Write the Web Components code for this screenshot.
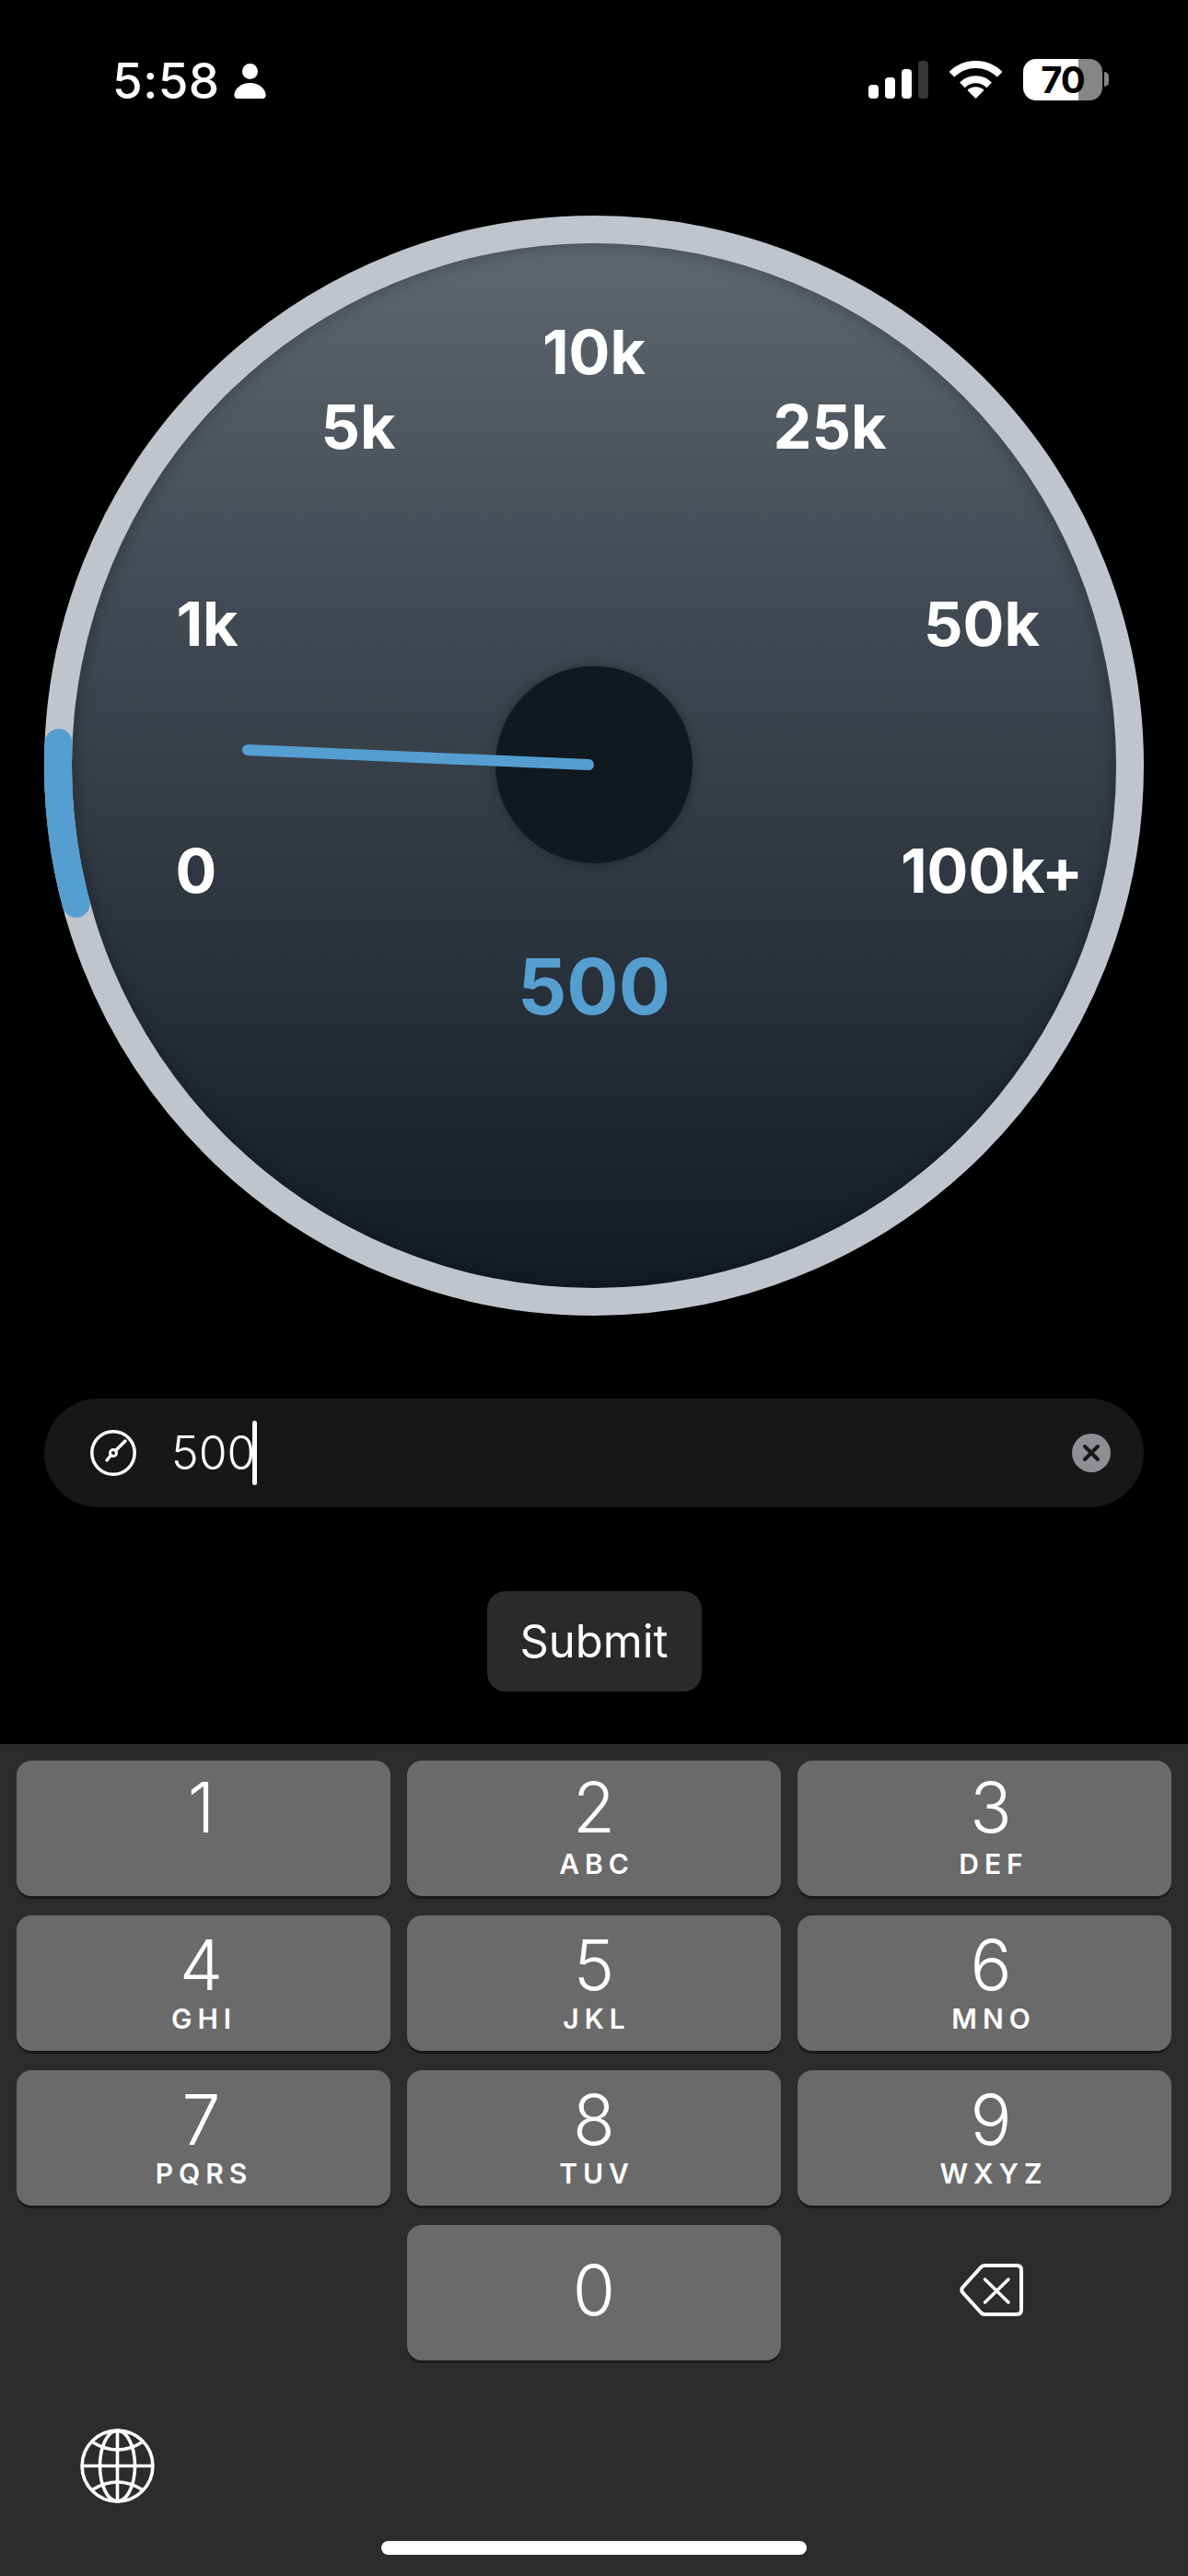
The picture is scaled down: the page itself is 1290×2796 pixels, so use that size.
<!DOCTYPE html>
<html lang="en">
<head>
<meta charset="utf-8">
<title>Gauge</title>
<style>
html, body { margin: 0; background: #000; }
body {
    width: 1290px;
    height: 2796px;
    overflow: hidden;
    display: flex;
    flex-direction: column;
    font-family: Inter, "Liberation Sans", sans-serif;
    color: #fff;
}
</style>
</head>
<body>
<status-bar time="5:58" battery="70"></status-bar>
<speed-gauge value="500">
    <gauge-mark x="597" y="148">10k</gauge-mark>
    <gauge-mark x="341" y="229">5k</gauge-mark>
    <gauge-mark x="853" y="229">25k</gauge-mark>
    <gauge-mark x="177" y="443">1k</gauge-mark>
    <gauge-mark x="1018" y="443">50k</gauge-mark>
    <gauge-mark x="165" y="711">0</gauge-mark>
    <gauge-mark x="1029" y="711">100k+</gauge-mark>
</speed-gauge>
<value-field>500</value-field>
<submit-button>Submit</submit-button>
<num-pad>
    <pad-key>1</pad-key>
    <pad-key letters="ABC">2</pad-key>
    <pad-key letters="DEF">3</pad-key>
    <pad-key low letters="GHI">4</pad-key>
    <pad-key low letters="JKL">5</pad-key>
    <pad-key low letters="MNO">6</pad-key>
    <pad-key low letters="PQRS">7</pad-key>
    <pad-key low letters="TUV">8</pad-key>
    <pad-key low letters="WXYZ">9</pad-key>
    <span></span>
    <pad-key middle>0</pad-key>
    <delete-key></delete-key>
</num-pad>

<script>
class StatusBar extends HTMLElement {
    constructor() {
        super();
        this.attachShadow({ mode: 'open' });
        this.shadowRoot.innerHTML = `
<style>
:host { display: block; height: 234px; flex-shrink: 0; }
.row {
    display: flex;
    align-items: flex-start;
    padding: 57px 93px 0 122px;
}
.time {
    font-size: 53px;
    line-height: 62px;
    font-weight: 500;
    letter-spacing: 0.4px;
}
.person { margin: 12px 0 0 15px; }
.right { margin-left: auto; display: flex; align-items: flex-start; margin-top: 7px; }
.signal { margin-top: 2px; }
.wifi { margin: 2px 0 0 23px; }
.battery {
    margin-left: 23px;
    width: 86px;
    height: 45px;
    border-radius: 14px;
    background: linear-gradient(to right, #fff 60px, #868686 60px);
    color: #000;
    font-size: 40px;
    font-weight: 700;
    line-height: 45px;
    text-align: center;
    letter-spacing: -1px;
    position: relative;
}
.battery::after {
    content: '';
    position: absolute;
    left: 88px;
    top: 14px;
    width: 5px;
    height: 16px;
    background: #868686;
    border-radius: 0 8px 8px 0;
}
</style>
<div class="row">
    <span class="time">${this.getAttribute('time')}</span>
    <svg class="person" width="35" height="38" viewBox="0 0 35 38"><circle cx="17.5" cy="8.5" r="8.5" fill="#fff"/><path fill="#fff" d="M17.5 21C8 21 1 27 .3 34Q.3 38 4 38H31Q34.7 38 34.7 34C34 27 27 21 17.5 21Z"/></svg>
    <div class="right">
        <svg class="signal" width="65" height="41" viewBox="0 0 65 41" fill="#fff">
            <rect x="0" y="26" width="11" height="15" rx="4"/>
            <rect x="18" y="18" width="11" height="23" rx="4"/>
            <rect x="36" y="9" width="11" height="32" rx="4"/>
            <rect x="54" y="0" width="11" height="41" rx="4" fill="#363636"/>
        </svg>
        <svg class="wifi" width="57" height="41" viewBox="0 0 57 41" fill="none" stroke="#fff" stroke-width="8">
            <path d="M2.3 14.8A37 37 0 0 1 54.7 14.8"/>
            <path d="M13.9 26.4A20.6 20.6 0 0 1 43.1 26.4"/>
            <path stroke="none" fill="#fff" d="M19.5 32A12.7 12.7 0 0 1 37.5 32L28.5 41Z"/>
        </svg>
        <div class="battery">${this.getAttribute('battery')}</div>
    </div>
</div>`;
    }
}

class GaugeMark extends HTMLElement {
    constructor() {
        super();
        this.attachShadow({ mode: 'open' });
        this.shadowRoot.innerHTML = `
<style>
:host {
    position: absolute;
    transform: translate(-50%, -50%);
    font-size: 66.5px;
    line-height: 1;
    font-weight: 700;
    color: #fff;
    white-space: nowrap;
}
</style>
<slot></slot>`;
    }

    connectedCallback() {
        this.style.left = this.getAttribute('x') + 'px';
        this.style.top = this.getAttribute('y') + 'px';
    }
}

class SpeedGauge extends HTMLElement {
    constructor() {
        super();
        this.attachShadow({ mode: 'open' });
        this.shadowRoot.innerHTML = `
<style>
:host {
    display: block;
    position: relative;
    flex-shrink: 0;
    box-sizing: border-box;
    width: 1194px;
    height: 1194px;
    margin: 0 0 90px 48px;
    border-radius: 50%;
    border: 30px solid #c0c5cd;
    background: #c0c5cd;
}
.face {
    position: absolute;
    inset: 0;
    border-radius: 50%;
    background: linear-gradient(to bottom, #60676f 0%, #454d58 30%, #2c343e 65%, #141b25 100%);
    box-shadow: inset 0 0 20px rgba(0, 0, 0, 0.3);
}
.marks { position: absolute; inset: -30px; }
.hub {
    position: absolute;
    left: 460px;
    top: 459px;
    width: 214px;
    height: 214px;
    border-radius: 50%;
    background: #111920;
    box-shadow: 0 0 14px rgba(0, 0, 0, 0.3);
}
svg { position: absolute; left: -30px; top: -30px; }
.value {
    position: absolute;
    left: 0;
    right: 0;
    top: 765px;
    text-align: center;
    font-size: 83.5px;
    line-height: 1;
    font-weight: 700;
    color: #559fd0;
}
</style>
<div class="face"></div>
<div class="hub"></div>
<svg width="1194" height="1194" viewBox="0 0 1194 1194" fill="none" stroke="#559fd0" stroke-linecap="round">
    <path stroke-width="30" d="M15.5 572A582 582 0 0 0 34.7 747"/>
    <line x1="221" y1="580" x2="591" y2="596" stroke-width="12"/>
</svg>
<div class="marks"><slot></slot></div>
<div class="value">${this.getAttribute('value')}</div>`;
    }
}

class ValueField extends HTMLElement {
    constructor() {
        super();
        this.attachShadow({ mode: 'open' });
        this.shadowRoot.innerHTML = `
<style>
:host {
    display: flex;
    align-items: center;
    flex-shrink: 0;
    box-sizing: border-box;
    width: 1194px;
    height: 118px;
    margin: 0 0 91px 48px;
    padding: 0 36px 0 50px;
    border-radius: 59px;
    background: #171717;
    color: #fff;
    font-size: 50px;
    font-weight: 300;
}
.text { margin-left: 38px; }
.caret {
    width: 5px;
    height: 70px;
    border-radius: 3px;
    background: #fff;
    margin-left: -3px;
}
.clear { margin-left: auto; }
</style>
<svg width="50" height="50" viewBox="0 0 50 50" fill="none" stroke="#fff" stroke-width="3.5" stroke-linecap="round">
    <circle cx="25" cy="25" r="23.2"/>
    <circle cx="25" cy="25" r="3.5" stroke-width="3"/>
    <path d="M27.5 22.5L38 12M22.5 27.5L18 33"/>
</svg>
<span class="text"><slot></slot></span>
<span class="caret"></span>
<svg class="clear" width="42" height="42" viewBox="0 0 42 42">
    <circle cx="21" cy="21" r="21" fill="#8e8e93"/>
    <path d="M14 14L28 28M28 14L14 28" stroke="#171717" stroke-width="4" stroke-linecap="round"/>
</svg>`;
    }
}

class SubmitButton extends HTMLElement {
    constructor() {
        super();
        this.attachShadow({ mode: 'open' });
        this.shadowRoot.innerHTML = `
<style>
:host {
    display: flex;
    align-items: center;
    justify-content: center;
    flex-shrink: 0;
    align-self: center;
    width: 233px;
    height: 109px;
    margin-bottom: 57px;
    border-radius: 20px;
    background: #2a2a2c;
    color: #fff;
    font-size: 49px;
    font-weight: 400;
}
</style>
<slot></slot>`;
    }
}

class PadKey extends HTMLElement {
    constructor() {
        super();
        this.attachShadow({ mode: 'open' });
        const letters = this.getAttribute('letters') || '';
        this.shadowRoot.innerHTML = `
<style>
:host {
    display: flex;
    flex-direction: column;
    align-items: center;
    height: 147px;
    box-sizing: border-box;
    padding-top: 13px;
    border-radius: 16px;
    background: #6a6a6a;
    box-shadow: 0 3px 0 #1a1a1a;
    color: #fff;
}
:host([low]) { padding-top: 16px; }
:host([middle]) { padding-top: 33px; }
.digit { font-size: 75px; line-height: 75px; font-weight: 300; }
.letters {
    margin-top: 9px;
    padding-left: 6px;
    font-size: 30px;
    line-height: 30px;
    font-weight: 600;
    letter-spacing: 6px;
}
:host([low]) .letters { margin-top: 6px; }
</style>
<span class="digit"><slot></slot></span>
<span class="letters">${letters}</span>`;
    }
}

class DeleteKey extends HTMLElement {
    constructor() {
        super();
        this.attachShadow({ mode: 'open' });
        this.shadowRoot.innerHTML = `
<style>
:host { display: flex; align-items: center; justify-content: center; height: 147px; padding: 0 0 6px 14px; box-sizing: border-box; }
</style>
<svg width="69" height="57" viewBox="0 0 69 57" fill="none" stroke="#fff" stroke-width="4" stroke-linecap="round" stroke-linejoin="round">
    <path d="M27 2H62Q67 2 67 7V50Q67 55 62 55H27Q25 55 23 53L3.5 31.5Q1 28.5 3.5 25.5L23 4Q25 2 27 2Z"/>
    <path d="M27.5 17L53 42M53 17L27.5 42" stroke-width="3.5"/>
</svg>`;
    }
}

class NumPad extends HTMLElement {
    constructor() {
        super();
        this.attachShadow({ mode: 'open' });
        this.shadowRoot.innerHTML = `
<style>
:host {
    display: block;
    flex: 1;
    background: #2c2c2c;
    padding: 18px 18px 0;
}
.keys {
    display: grid;
    grid-template-columns: repeat(3, 406px);
    grid-auto-rows: 147px;
    column-gap: 18px;
    row-gap: 21px;
}
::slotted(pad-key:nth-child(3n)) { padding-left: 14px; }
::slotted(pad-key:nth-child(3n+1)) { padding-right: 5px; }
.globe { display: block; margin: 74px 0 0 69px; }
.home {
    width: 462px;
    height: 15px;
    margin: 41px auto 0;
    border-radius: 8px;
    background: #fff;
}
</style>
<div class="keys"><slot></slot></div>
<svg class="globe" width="81" height="81" viewBox="0 0 81 81" fill="none" stroke="#fff" stroke-width="3.6">
    <circle cx="40.5" cy="40.5" r="38.4"/>
    <ellipse cx="40.5" cy="40.5" rx="19" ry="38.4"/>
    <path d="M40.5 2V79M2 40.5H79"/>
    <path d="M14 15Q40.5 31 67 15M14 66Q40.5 50 67 66"/>
</svg>
<div class="home"></div>`;
    }
}

customElements.define('status-bar', StatusBar);
customElements.define('gauge-mark', GaugeMark);
customElements.define('speed-gauge', SpeedGauge);
customElements.define('value-field', ValueField);
customElements.define('submit-button', SubmitButton);
customElements.define('pad-key', PadKey);
customElements.define('delete-key', DeleteKey);
customElements.define('num-pad', NumPad);
</script>
</body>
</html>
